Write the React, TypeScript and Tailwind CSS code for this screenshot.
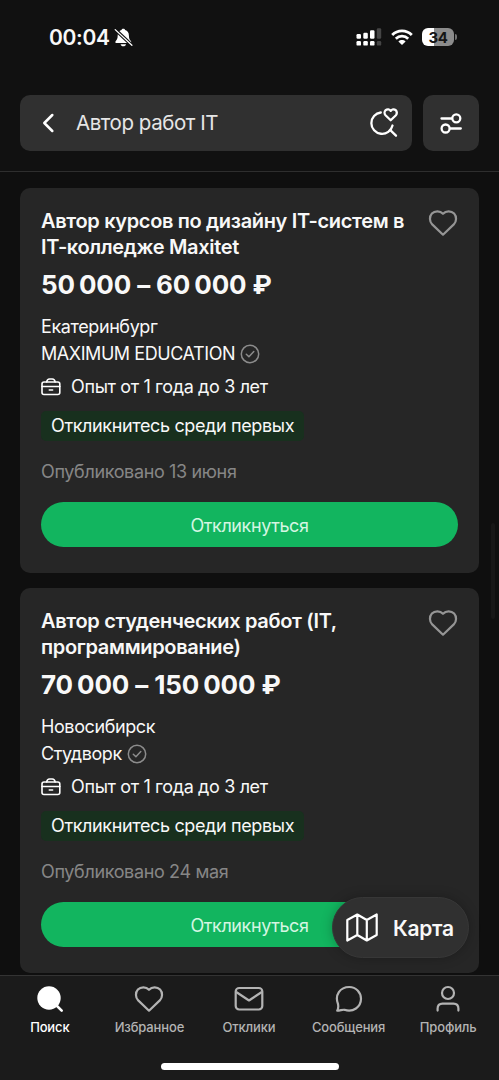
import React from 'react';

interface Vacancy {
  id: number;
  title: string[];
  salary: string;
  city: string;
  company: string;
  experience: string;
  published: string;
}

const vacancies: Vacancy[] = [
  {
    id: 1,
    title: ['Автор курсов по дизайну IT-систем в', 'IT-колледже Maxitet'],
    salary: '50\u2009000 – 60\u2009000 ₽',
    city: 'Екатеринбург',
    company: 'MAXIMUM EDUCATION',
    experience: 'Опыт от 1 года до 3 лет',
    published: 'Опубликовано 13 июня',
  },
  {
    id: 2,
    title: ['Автор студенческих работ (IT,', 'программирование)'],
    salary: '70\u2009000 – 150\u2009000 ₽',
    city: 'Новосибирск',
    company: 'Студворк',
    experience: 'Опыт от 1 года до 3 лет',
    published: 'Опубликовано 24 мая',
  },
];

const HeartIcon = () => (
  <svg width="30" height="28" viewBox="0 0 30 28" fill="none" stroke="currentColor" strokeWidth="2.200" strokeLinejoin="round">
    <path d="M15 25.700 4.200 15.400C1.300 12.500 1.200 7.400 3.900 4.500C6.700 1.600 12 1.400 15 4.800C18 1.400 23.300 1.600 26.100 4.500C28.800 7.400 28.700 12.500 25.800 15.400Z" />
  </svg>
);

const BellOffIcon = () => (
  <svg width="19" height="19" viewBox="0 0 19 19" fill="none">
    <path d="M9.300 0.800C8.300 0.800 7.700 1.300 7.500 2C5 2.800 3.700 4.800 3.700 7.500C3.700 11 2.600 12 1.600 13.300C1 14.200 1.500 15.100 2.500 15.100H16.100C17.100 15.100 17.600 14.200 17 13.300C16 12 14.900 11 14.900 7.500C14.900 4.800 13.600 2.800 11.100 2C10.900 1.300 10.300 0.800 9.300 0.800Z" fill="white" />
    <path d="M6.600 16.200H12C11.700 17.500 10.700 18.300 9.300 18.300C7.900 18.300 6.900 17.500 6.600 16.200Z" fill="white" />
    <path d="M0.500 0.800 18.500 17.800" stroke="#111111" strokeWidth="3.400" />
    <path d="M1.200 1.600 17.900 17.300" stroke="white" strokeWidth="1.300" strokeLinecap="round" />
  </svg>
);

const SignalIcon = () => (
  <svg width="26" height="18" viewBox="0 0 26 18" fill="white">
    <rect x="0.500" y="6" width="4.500" height="4.800" rx="1.200" />
    <rect x="7.300" y="4.800" width="4.500" height="6" rx="1.200" />
    <rect x="14" y="2.300" width="4.500" height="8.500" rx="1.200" />
    <rect x="20.800" y="0.300" width="4.400" height="10.500" rx="1.200" fill="#454545" />
    <rect x="0.500" y="13" width="4.500" height="4.600" rx="1.200" />
    <rect x="7.300" y="13" width="4.500" height="4.600" rx="1.200" />
    <rect x="14" y="13" width="4.500" height="4.600" rx="1.200" />
    <rect x="20.800" y="13" width="4.400" height="4.600" rx="1.200" fill="#454545" />
  </svg>
);

const WifiIcon = () => (
  <svg width="22" height="17" viewBox="0 0 22 17" fill="none" stroke="white" strokeWidth="2.800">
    <path d="M1.200 6C6.600 0.400 15.400 0.400 20.800 6" />
    <path d="M4.800 9.700C8.300 6.300 13.700 6.300 17.200 9.700" />
    <path d="M11 16 7.400 12.500C9.500 10.600 12.500 10.600 14.600 12.500Z" fill="white" stroke="none" />
  </svg>
);

const SavedSearchIcon = () => (
  <svg width="28" height="30" viewBox="0 0 28 30" fill="none" stroke="white" strokeWidth="2.300" strokeLinecap="round" strokeLinejoin="round">
    <path d="M10.800 4.500A10.700 10.700 0 1 0 22.500 17.500" />
    <path d="M20.300 22.200 26 27.700" />
    <path d="M20.700 12.300 15.500 7.200C14.200 5.800 14.300 3.500 15.700 2.200C17.200 0.900 19.600 1.100 20.700 2.900C21.800 1.100 24.200 0.900 25.700 2.200C27.100 3.500 27.200 5.800 25.900 7.200Z" />
  </svg>
);

const FilterIcon = () => (
  <svg width="22" height="21" viewBox="0 0 22 21" fill="none" stroke="white" strokeWidth="2.300" strokeLinecap="round">
    <path d="M1.500 5.500H12M10 15.500H20.800" />
    <circle cx="16.300" cy="5.300" r="4" />
    <circle cx="5.600" cy="15.500" r="4" />
  </svg>
);

const CheckIcon = () => (
  <svg width="20" height="20" viewBox="0 0 20 20" fill="none" stroke="#8c8c8c" strokeWidth="1.500" strokeLinecap="round" strokeLinejoin="round">
    <circle cx="10" cy="10" r="8.700" />
    <path d="M6.300 10.300 8.900 12.700 13.800 7.600" />
  </svg>
);

const BriefcaseIcon = () => (
  <svg width="20" height="18" viewBox="0 0 20 18" fill="none" stroke="white" strokeWidth="1.600" strokeLinecap="round" strokeLinejoin="round">
    <rect x="1" y="4" width="17.800" height="12.500" rx="2" />
    <path d="M5.700 4C6 2 7 1 8.500 1H11.300C12.800 1 13.800 2 14.100 4M1 8.500H18.800M8.300 12H11.600" />
  </svg>
);

const MapIcon = () => (
  <svg width="32" height="29" viewBox="0 0 32 29" fill="none" stroke="white" strokeWidth="2.200" strokeLinejoin="round">
    <path d="M1.300 7 11.300 1.500 20.800 7 30.700 1.500V22L20.800 27.500 11.300 22 1.300 27.500ZM11.300 1.500V22M20.800 7V27.500" />
  </svg>
);

const SearchIcon = () => (
  <svg width="28" height="28" viewBox="0 0 28 28" fill="none">
    <circle cx="13" cy="13" r="11.700" fill="white" />
    <path d="M20.500 20.500 25.700 25.700" stroke="white" strokeWidth="2.600" strokeLinecap="round" />
  </svg>
);

const MailIcon = () => (
  <svg width="30" height="28" viewBox="0 0 30 28" fill="none" stroke="currentColor" strokeWidth="2.200" strokeLinejoin="round">
    <rect x="1.700" y="3" width="26.600" height="21.500" rx="3.500" />
    <path d="M2.200 7 15 15.500 27.800 7" />
  </svg>
);

const ChatIcon = () => (
  <svg width="28" height="28" viewBox="0 0 28 28" fill="none" stroke="currentColor" strokeWidth="2.200" strokeLinejoin="round">
    <path d="M2.200 25.700C3.500 23.500 3.500 21.500 3 19C-0.500 10 5 2 14.300 2C21 2 26 7.300 26 13.800C26 22 18 27.800 9.500 24.800C7.500 24.500 5 25.700 2.200 25.700Z" />
  </svg>
);

const ProfileIcon = () => (
  <svg width="26" height="28" viewBox="0 0 26 28" fill="none" stroke="currentColor" strokeWidth="2.200" strokeLinecap="round">
    <circle cx="13" cy="8" r="6" />
    <path d="M2.600 25.600V23.500C2.600 20.500 4.500 18.600 7.500 18.600H18.500C21.500 18.600 23.400 20.500 23.400 23.500V25.600" />
  </svg>
);

const tabs = [
  { label: 'Поиск', icon: <SearchIcon />, active: true },
  { label: 'Избранное', icon: <HeartIcon />, active: false },
  { label: 'Отклики', icon: <MailIcon />, active: false },
  { label: 'Сообщения', icon: <ChatIcon />, active: false },
  { label: 'Профиль', icon: <ProfileIcon />, active: false },
];

const StatusBar = () => (
  <div className="flex h-[74px] items-center justify-between pl-[49px] pr-[42px]">
    <div className="flex items-center gap-1">
      <span className="pt-px text-[21px] font-semibold leading-[26px] tracking-[-0.3px]">00:04</span>
      <BellOffIcon />
    </div>
    <div className="flex items-center">
      <SignalIcon />
      <div className="ml-[9px]">
        <WifiIcon />
      </div>
      <div className="ml-[9px] flex h-[18px] w-8 items-center justify-center rounded-md bg-[linear-gradient(90deg,#ffffff_36%,#8c8c8c_36%)] text-[15px] font-bold leading-none tracking-[-0.3px] text-[#151515]">
        34
      </div>
      <div className="ml-px h-1.5 w-[2px] rounded-r-full bg-[#737373]" />
    </div>
  </div>
);

const VacancyCard = ({ vacancy }: { vacancy: Vacancy }) => (
  <div className="flex h-[385px] shrink-0 flex-col items-start rounded-[10px] bg-[#262626] px-[21px] pt-[21px]">
    <div className="flex w-full justify-between">
      <h2 className="whitespace-nowrap text-[20px] font-semibold leading-[25.500px] tracking-[-0.34px]">
        {vacancy.title.map((line) => (
          <span key={line} className="block">{line}</span>
        ))}
      </h2>
      <button className="h-7 text-[#959595]">
        <HeartIcon />
      </button>
    </div>
    <p className="mt-[10px] whitespace-nowrap text-[26px] font-bold leading-[30px] tracking-[-0.12px]">{vacancy.salary}</p>
    <p className="mt-[13px] text-[18px] leading-[27px] tracking-[-0.4px]">{vacancy.city}</p>
    <div className="flex items-center gap-[5px] text-[18px] leading-[27px] tracking-[-0.43px]">
      <span>{vacancy.company}</span>
      <CheckIcon />
    </div>
    <div className="mt-[6px] flex items-center gap-[10px] text-[18px] leading-[27px] tracking-[-0.36px]">
      <BriefcaseIcon />
      <span>{vacancy.experience}</span>
    </div>
    <span className="mt-[11px] flex h-[30px] items-center rounded-[5px] bg-[#18301e] px-[10px] pb-px text-[18px] tracking-[-0.37px]">
      Откликнитесь среди первых
    </span>
    <p className="mt-[17px] text-[18px] leading-[27px] tracking-[-0.36px] text-[#868686]">{vacancy.published}</p>
    <button className="mt-[17px] h-[45px] w-full rounded-full bg-[#12b55f] pt-0.5 text-[18px] tracking-[-0.4px] text-[#d4f6e2]">
      Откликнуться
    </button>
  </div>
);

const App = () => {
  return (
    <div className="relative flex h-[1080px] w-[499px] flex-col overflow-hidden bg-[#0f0f0f] font-['Inter',sans-serif] text-[#f8f8f8]">
      <header className="h-[172px] shrink-0 border-b border-[#2e2e2e] bg-[#111111]">
        <StatusBar />
        <div className="mt-[21px] flex gap-[11px] px-5">
          <div className="flex h-14 w-[392px] items-center rounded-[10px] bg-[#303030] pl-[22px] pr-[14px]">
            <svg width="13" height="20" viewBox="0 0 13 20" fill="none" stroke="white" strokeWidth="2.500" strokeLinecap="round" strokeLinejoin="round">
              <path d="M10.300 2 2.300 10 10.300 18" />
            </svg>
            <span className="ml-[21px] flex-1 pt-px text-[20.500px] tracking-[-0.45px] text-[#e6e6e6]">Автор работ IT</span>
            <SavedSearchIcon />
          </div>
          <button className="flex h-14 w-14 items-center justify-center rounded-[10px] bg-[#303030]">
            <FilterIcon />
          </button>
        </div>
      </header>

      <main className="flex h-[803px] shrink-0 flex-col gap-[15px] overflow-hidden px-5 pt-4">
        {vacancies.map((vacancy) => (
          <VacancyCard key={vacancy.id} vacancy={vacancy} />
        ))}
      </main>

      <button className="absolute right-[30px] top-[897px] flex h-[61px] w-[137px] items-center rounded-full border border-[#373737] bg-[#303030] pl-[13px] text-[21px] font-semibold tracking-[-0.3px] shadow-[0_0_12px_rgba(0,0,0,0.25)]">
        <MapIcon />
        <span className="ml-[15px] pt-0.5">Карта</span>
      </button>

      <div className="absolute right-1 top-[523px] h-[96px] w-1 rounded-full bg-[#171717]" />

      <nav className="flex flex-1 flex-col items-center justify-between border-t border-[#333333] bg-[#1b1b1b] pb-[10px]">
        <div className="flex w-full pr-px">
          {tabs.map((tab) => (
            <div
              key={tab.label}
              className={tab.active ? 'flex flex-1 flex-col items-center pt-[9px] text-white' : 'flex flex-1 flex-col items-center pt-[9px] text-[#b3b3b3]'}
            >
              {tab.icon}
              <span className="mt-[5px] text-[13px] font-medium leading-[18px] tracking-[-0.15px]">{tab.label}</span>
            </div>
          ))}
        </div>
        <div className="h-[7px] w-[178px] rounded-full bg-white" />
      </nav>
    </div>
  );
};

export default App;
